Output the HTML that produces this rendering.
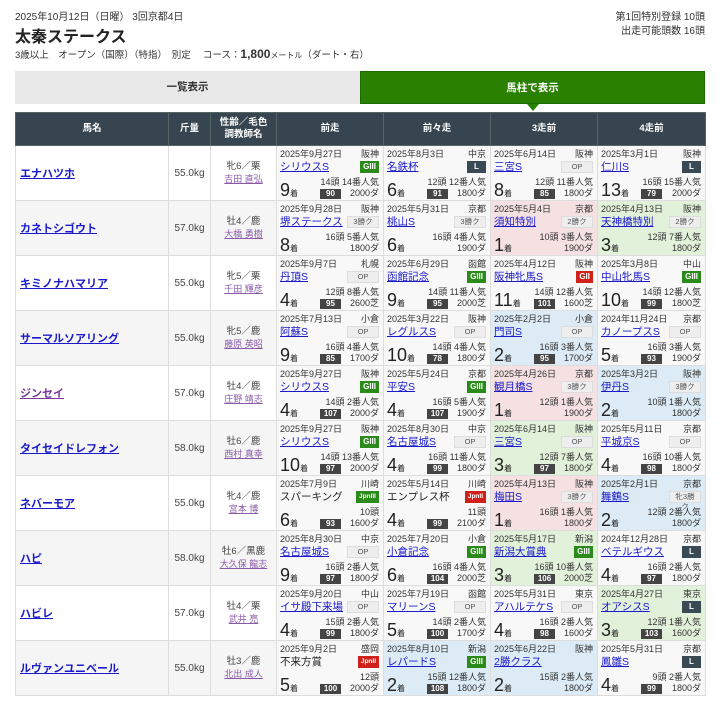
<!DOCTYPE html>
<html><head><meta charset="utf-8">
<style>
*{margin:0;padding:0;box-sizing:border-box}
body{width:720px;height:702px;background:#fff;font-family:"Liberation Sans","Noto Sans CJK JP",sans-serif;color:#333;position:relative;overflow:hidden}
.top1{position:absolute;left:15px;top:8px;font-size:10px;color:#333}
.title{position:absolute;left:15px;top:23px;font-size:16px;font-weight:bold;color:#222}
.sub{position:absolute;left:15px;top:47px;font-size:9.5px;color:#333}
.sub b{font-size:12px}
.sub small{font-size:8px}
.tr{position:absolute;right:15px;text-align:right;font-size:10px;color:#333}
.tab{position:absolute;top:71px;height:33px;width:345px;font-size:10.5px;font-weight:bold;text-align:center;line-height:33px}
.t1{left:15px;background:#e8e8e8;color:#333}
.t2{left:360px;background:#2a8000;color:#fff;border:1px solid #1f6a00}
.tri{position:absolute;left:527px;top:104px;width:0;height:0;border-left:6px solid transparent;border-right:6px solid transparent;border-top:7px solid #2a8000}
table{position:absolute;left:15px;top:112px;width:690px;border-collapse:collapse;table-layout:fixed}
th{background:#36454f;color:#fff;font-size:9.5px;height:33px;border:1px solid #566;font-weight:bold;line-height:12px}
td{border:1px solid #ddd;height:55px;font-size:10px;vertical-align:middle}
tr.g td{background:#f5f5f5}
td.nm a{color:#1a1acc;font-weight:bold;font-size:11px;margin-left:4px;text-decoration:underline}
td.nm a.vis{color:#7a3a9a}
td.kg{text-align:center;color:#444;font-size:10px}
td.se{text-align:center;font-size:9.5px;color:#444;line-height:13px}
td.se a{color:#8a5aa8;font-size:9px;text-decoration:underline}
td.r{background:#f8f8f8 !important;padding:0;vertical-align:top}
td.w1{background:#f5e1e1 !important}
td.w2{background:#dcebf5 !important}
td.w3{background:#e2f1da !important}
.c{position:relative;height:54px;font-size:9px;color:#333;line-height:1}
.c .d{position:absolute;left:3px;top:4px}
.c .v{position:absolute;right:4px;top:4px}
.c .n{position:absolute;left:3px;top:16px;font-size:10.5px;color:#1a1acc;text-decoration:underline;white-space:nowrap}
.c span.n{text-decoration:none;color:#222}
.c .b{position:absolute;right:4px;top:15px;height:12px;font-size:8px;line-height:12px;text-align:center;font-style:normal;font-weight:bold;color:#fff;padding:0 3px}
.g3{background:#2a8a1a}.g2{background:#d0201a}.L{background:#3a4a55;width:19px}
.op{background:#eee;color:#555 !important;width:32px;border:1px solid #ddd;font-weight:normal !important;line-height:10px !important;font-size:7.5px !important}
.j3{background:#2a8a1a;font-size:6.5px !important}.j2{background:#d0201a;font-size:6.5px !important}
.c .h{position:absolute;right:4px;top:32px}
.c .p{position:absolute;left:3px;top:35px;font-size:18px;font-weight:normal;line-height:18px;color:#222}
.c .p small{font-size:8px}
.c .s{position:absolute;left:43px;top:43px;width:21px;height:10px;background:#444;color:#fff;font-size:8px;line-height:10px;text-align:center;font-style:normal;font-weight:bold}
.c .k{position:absolute;right:4px;top:43px}
</style></head><body>
<div class="top1">2025年10月12日（日曜） 3回京都4日</div>
<div class="title">太秦ステークス</div>
<div class="sub">3歳以上　オープン（国際）（特指）　別定　 コース：<b>1,800</b><small>メートル</small>（ダート・右）</div>
<div class="tr" style="top:8px">第1回特別登録 10頭</div>
<div class="tr" style="top:22px">出走可能頭数 16頭</div>
<div class="tab t1">一覧表示</div>
<div class="tab t2">馬柱で表示</div>
<div class="tri"></div>
<table>
<colgroup><col style="width:153px"><col style="width:42px"><col style="width:66px"><col style="width:107px"><col style="width:107px"><col style="width:107px"><col style="width:108px"></colgroup>
<tr><th>馬名</th><th>斤量</th><th>性齢／毛色<br>調教師名</th><th>前走</th><th>前々走</th><th>3走前</th><th>4走前</th></tr>

<tr><td class="nm"><a>エナハツホ</a></td><td class="kg">55.0kg</td><td class="se">牝6／栗<br><a>吉田 直弘</a></td>
<td class="r"><div class="c"><span class="d">2025年9月27日</span><span class="v">阪神</span><a class="n">シリウスS</a><i class="b g3">GIII</i><span class="h">14頭 14番人気</span><b class="p">9<small>着</small></b><i class="s">90</i><span class="k">2000ダ</span></div></td>
<td class="r"><div class="c"><span class="d">2025年8月3日</span><span class="v">中京</span><a class="n">名鉄杯</a><i class="b L">L</i><span class="h">12頭 12番人気</span><b class="p">6<small>着</small></b><i class="s">91</i><span class="k">1800ダ</span></div></td>
<td class="r"><div class="c"><span class="d">2025年6月14日</span><span class="v">阪神</span><a class="n">三宮S</a><i class="b op">OP</i><span class="h">12頭 11番人気</span><b class="p">8<small>着</small></b><i class="s">85</i><span class="k">1800ダ</span></div></td>
<td class="r"><div class="c"><span class="d">2025年3月1日</span><span class="v">阪神</span><a class="n">仁川S</a><i class="b L">L</i><span class="h">16頭 15番人気</span><b class="p">13<small>着</small></b><i class="s">79</i><span class="k">2000ダ</span></div></td></tr>

<tr class="g"><td class="nm"><a>カネトシゴウト</a></td><td class="kg">57.0kg</td><td class="se">牡4／鹿<br><a>大橋 勇樹</a></td>
<td class="r"><div class="c"><span class="d">2025年9月28日</span><span class="v">阪神</span><a class="n">堺ステークス</a><i class="b op">3勝ク</i><span class="h">16頭 5番人気</span><b class="p">8<small>着</small></b><span class="k">1800ダ</span></div></td>
<td class="r"><div class="c"><span class="d">2025年5月31日</span><span class="v">京都</span><a class="n">桃山S</a><i class="b op">3勝ク</i><span class="h">16頭 4番人気</span><b class="p">6<small>着</small></b><span class="k">1900ダ</span></div></td>
<td class="r w1"><div class="c"><span class="d">2025年5月4日</span><span class="v">京都</span><a class="n">須知特別</a><i class="b op">2勝ク</i><span class="h">10頭 3番人気</span><b class="p">1<small>着</small></b><span class="k">1900ダ</span></div></td>
<td class="r w3"><div class="c"><span class="d">2025年4月13日</span><span class="v">阪神</span><a class="n">天神橋特別</a><i class="b op">2勝ク</i><span class="h">12頭 7番人気</span><b class="p">3<small>着</small></b><span class="k">1800ダ</span></div></td></tr>

<tr><td class="nm"><a>キミノナハマリア</a></td><td class="kg">55.0kg</td><td class="se">牝5／栗<br><a>千田 輝彦</a></td>
<td class="r"><div class="c"><span class="d">2025年9月7日</span><span class="v">札幌</span><a class="n">丹頂S</a><i class="b op">OP</i><span class="h">12頭 8番人気</span><b class="p">4<small>着</small></b><i class="s">95</i><span class="k">2600芝</span></div></td>
<td class="r"><div class="c"><span class="d">2025年6月29日</span><span class="v">函館</span><a class="n">函館記念</a><i class="b g3">GIII</i><span class="h">14頭 11番人気</span><b class="p">9<small>着</small></b><i class="s">95</i><span class="k">2000芝</span></div></td>
<td class="r"><div class="c"><span class="d">2025年4月12日</span><span class="v">阪神</span><a class="n">阪神牝馬S</a><i class="b g2">GII</i><span class="h">14頭 12番人気</span><b class="p">11<small>着</small></b><i class="s">101</i><span class="k">1600芝</span></div></td>
<td class="r"><div class="c"><span class="d">2025年3月8日</span><span class="v">中山</span><a class="n">中山牝馬S</a><i class="b g3">GIII</i><span class="h">14頭 12番人気</span><b class="p">10<small>着</small></b><i class="s">99</i><span class="k">1800芝</span></div></td></tr>

<tr class="g"><td class="nm"><a>サーマルソアリング</a></td><td class="kg">55.0kg</td><td class="se">牝5／鹿<br><a>藤原 英昭</a></td>
<td class="r"><div class="c"><span class="d">2025年7月13日</span><span class="v">小倉</span><a class="n">阿蘇S</a><i class="b op">OP</i><span class="h">16頭 4番人気</span><b class="p">9<small>着</small></b><i class="s">85</i><span class="k">1700ダ</span></div></td>
<td class="r"><div class="c"><span class="d">2025年3月22日</span><span class="v">阪神</span><a class="n">レグルスS</a><i class="b op">OP</i><span class="h">14頭 4番人気</span><b class="p">10<small>着</small></b><i class="s">78</i><span class="k">1800ダ</span></div></td>
<td class="r w2"><div class="c"><span class="d">2025年2月2日</span><span class="v">小倉</span><a class="n">門司S</a><i class="b op">OP</i><span class="h">16頭 3番人気</span><b class="p">2<small>着</small></b><i class="s">95</i><span class="k">1700ダ</span></div></td>
<td class="r"><div class="c"><span class="d">2024年11月24日</span><span class="v">京都</span><a class="n">カノープスS</a><i class="b op">OP</i><span class="h">16頭 3番人気</span><b class="p">5<small>着</small></b><i class="s">93</i><span class="k">1900ダ</span></div></td></tr>

<tr><td class="nm"><a class="vis">ジンセイ</a></td><td class="kg">57.0kg</td><td class="se">牡4／鹿<br><a>庄野 靖志</a></td>
<td class="r"><div class="c"><span class="d">2025年9月27日</span><span class="v">阪神</span><a class="n">シリウスS</a><i class="b g3">GIII</i><span class="h">14頭 2番人気</span><b class="p">4<small>着</small></b><i class="s">107</i><span class="k">2000ダ</span></div></td>
<td class="r"><div class="c"><span class="d">2025年5月24日</span><span class="v">京都</span><a class="n">平安S</a><i class="b g3">GIII</i><span class="h">16頭 5番人気</span><b class="p">4<small>着</small></b><i class="s">107</i><span class="k">1900ダ</span></div></td>
<td class="r w1"><div class="c"><span class="d">2025年4月26日</span><span class="v">京都</span><a class="n">観月橋S</a><i class="b op">3勝ク</i><span class="h">12頭 1番人気</span><b class="p">1<small>着</small></b><span class="k">1900ダ</span></div></td>
<td class="r w2"><div class="c"><span class="d">2025年3月2日</span><span class="v">阪神</span><a class="n">伊丹S</a><i class="b op">3勝ク</i><span class="h">10頭 1番人気</span><b class="p">2<small>着</small></b><span class="k">1800ダ</span></div></td></tr>

<tr class="g"><td class="nm"><a>タイセイドレフォン</a></td><td class="kg">58.0kg</td><td class="se">牡6／鹿<br><a>西村 真幸</a></td>
<td class="r"><div class="c"><span class="d">2025年9月27日</span><span class="v">阪神</span><a class="n">シリウスS</a><i class="b g3">GIII</i><span class="h">14頭 13番人気</span><b class="p">10<small>着</small></b><i class="s">97</i><span class="k">2000ダ</span></div></td>
<td class="r"><div class="c"><span class="d">2025年8月30日</span><span class="v">中京</span><a class="n">名古屋城S</a><i class="b op">OP</i><span class="h">16頭 11番人気</span><b class="p">4<small>着</small></b><i class="s">99</i><span class="k">1800ダ</span></div></td>
<td class="r w3"><div class="c"><span class="d">2025年6月14日</span><span class="v">阪神</span><a class="n">三宮S</a><i class="b op">OP</i><span class="h">12頭 7番人気</span><b class="p">3<small>着</small></b><i class="s">97</i><span class="k">1800ダ</span></div></td>
<td class="r"><div class="c"><span class="d">2025年5月11日</span><span class="v">京都</span><a class="n">平城京S</a><i class="b op">OP</i><span class="h">16頭 10番人気</span><b class="p">4<small>着</small></b><i class="s">98</i><span class="k">1800ダ</span></div></td></tr>

<tr><td class="nm"><a>ネバーモア</a></td><td class="kg">55.0kg</td><td class="se">牝4／鹿<br><a>宮本 博</a></td>
<td class="r"><div class="c"><span class="d">2025年7月9日</span><span class="v">川崎</span><span class="n">スパーキング</span><i class="b j3">JpnIII</i><span class="h">10頭</span><b class="p">6<small>着</small></b><i class="s">93</i><span class="k">1600ダ</span></div></td>
<td class="r"><div class="c"><span class="d">2025年5月14日</span><span class="v">川崎</span><span class="n">エンプレス杯</span><i class="b j2">JpnII</i><span class="h">11頭</span><b class="p">4<small>着</small></b><i class="s">99</i><span class="k">2100ダ</span></div></td>
<td class="r w1"><div class="c"><span class="d">2025年4月13日</span><span class="v">阪神</span><a class="n">梅田S</a><i class="b op">3勝ク</i><span class="h">16頭 1番人気</span><b class="p">1<small>着</small></b><span class="k">1800ダ</span></div></td>
<td class="r w2"><div class="c"><span class="d">2025年2月1日</span><span class="v">京都</span><a class="n">舞鶴S</a><i class="b op">牝3勝ク</i><span class="h">12頭 2番人気</span><b class="p">2<small>着</small></b><span class="k">1800ダ</span></div></td></tr>

<tr class="g"><td class="nm"><a>ハピ</a></td><td class="kg">58.0kg</td><td class="se">牡6／黒鹿<br><a>大久保 龍志</a></td>
<td class="r"><div class="c"><span class="d">2025年8月30日</span><span class="v">中京</span><a class="n">名古屋城S</a><i class="b op">OP</i><span class="h">16頭 2番人気</span><b class="p">9<small>着</small></b><i class="s">97</i><span class="k">1800ダ</span></div></td>
<td class="r"><div class="c"><span class="d">2025年7月20日</span><span class="v">小倉</span><a class="n">小倉記念</a><i class="b g3">GIII</i><span class="h">16頭 4番人気</span><b class="p">6<small>着</small></b><i class="s">104</i><span class="k">2000芝</span></div></td>
<td class="r w3"><div class="c"><span class="d">2025年5月17日</span><span class="v">新潟</span><a class="n">新潟大賞典</a><i class="b g3">GIII</i><span class="h">16頭 10番人気</span><b class="p">3<small>着</small></b><i class="s">106</i><span class="k">2000芝</span></div></td>
<td class="r"><div class="c"><span class="d">2024年12月28日</span><span class="v">京都</span><a class="n">ベテルギウス</a><i class="b L">L</i><span class="h">16頭 2番人気</span><b class="p">4<small>着</small></b><i class="s">97</i><span class="k">1800ダ</span></div></td></tr>

<tr><td class="nm"><a>ハビレ</a></td><td class="kg">57.0kg</td><td class="se">牡4／栗<br><a>武井 亮</a></td>
<td class="r"><div class="c"><span class="d">2025年9月20日</span><span class="v">中山</span><a class="n">イサ殿下来場</a><i class="b op">OP</i><span class="h">15頭 2番人気</span><b class="p">4<small>着</small></b><i class="s">99</i><span class="k">1800ダ</span></div></td>
<td class="r"><div class="c"><span class="d">2025年7月19日</span><span class="v">函館</span><a class="n">マリーンS</a><i class="b op">OP</i><span class="h">14頭 2番人気</span><b class="p">5<small>着</small></b><i class="s">100</i><span class="k">1700ダ</span></div></td>
<td class="r"><div class="c"><span class="d">2025年5月31日</span><span class="v">東京</span><a class="n">アハルテケS</a><i class="b op">OP</i><span class="h">16頭 2番人気</span><b class="p">4<small>着</small></b><i class="s">98</i><span class="k">1600ダ</span></div></td>
<td class="r w3"><div class="c"><span class="d">2025年4月27日</span><span class="v">東京</span><a class="n">オアシスS</a><i class="b L">L</i><span class="h">12頭 1番人気</span><b class="p">3<small>着</small></b><i class="s">103</i><span class="k">1600ダ</span></div></td></tr>

<tr class="g"><td class="nm"><a>ルヴァンユニベール</a></td><td class="kg">55.0kg</td><td class="se">牡3／鹿<br><a>北出 成人</a></td>
<td class="r"><div class="c"><span class="d">2025年9月2日</span><span class="v">盛岡</span><span class="n">不来方賞</span><i class="b j2">JpnII</i><span class="h">12頭</span><b class="p">5<small>着</small></b><i class="s">100</i><span class="k">2000ダ</span></div></td>
<td class="r w2"><div class="c"><span class="d">2025年8月10日</span><span class="v">新潟</span><a class="n">レパードS</a><i class="b g3">GIII</i><span class="h">15頭 12番人気</span><b class="p">2<small>着</small></b><i class="s">108</i><span class="k">1800ダ</span></div></td>
<td class="r w2"><div class="c"><span class="d">2025年6月22日</span><span class="v">阪神</span><a class="n">2勝クラス</a><span class="h">15頭 2番人気</span><b class="p">2<small>着</small></b><span class="k">1800ダ</span></div></td>
<td class="r"><div class="c"><span class="d">2025年5月31日</span><span class="v">京都</span><a class="n">鳳雛S</a><i class="b L">L</i><span class="h">9頭 2番人気</span><b class="p">4<small>着</small></b><i class="s">99</i><span class="k">1800ダ</span></div></td></tr>
</table>
</body></html>
